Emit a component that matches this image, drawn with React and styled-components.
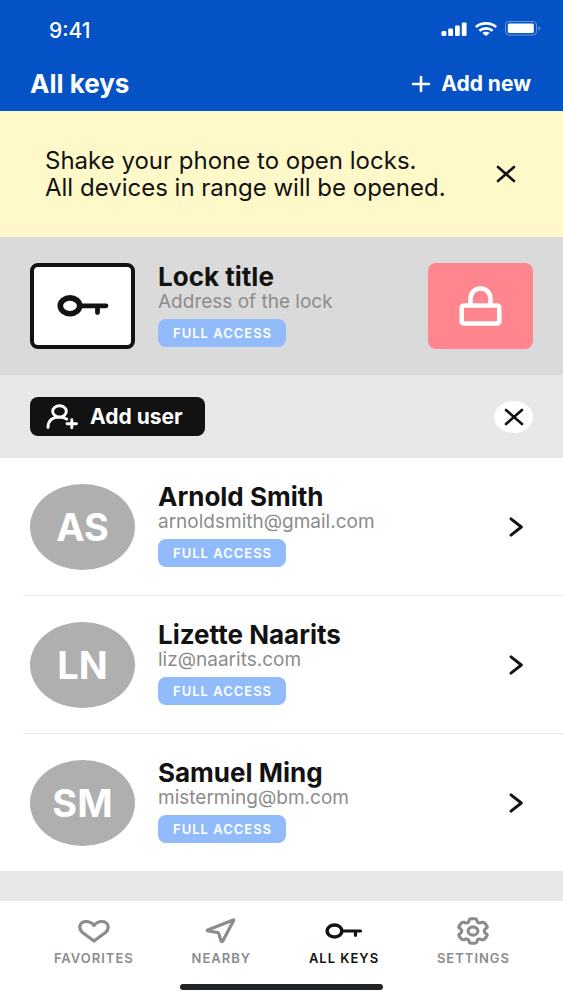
import React from "react";
import styled, { createGlobalStyle } from "styled-components";

const colors = {
  BLUE: "#0552c7",
  BLUE_LIGHT: "#91bbfb",
  YELLOW: "#fff9ca",
  RED: "#ff868f",
  BLACK: "#121212",
  GRAY_10: "#e8e8e8",
  GRAY_20: "#dadada",
  GRAY_40: "#afafaf",
  GRAY_60: "#8c8c8c",
};

const GlobalStyle = createGlobalStyle`
  * {
    box-sizing: border-box;
  }

  body {
    margin: 0;
    background-color: ${colors.GRAY_10};
    color: ${colors.BLACK};
    font-family: Inter, "Liberation Sans", sans-serif;
  }

  button {
    font-family: inherit;
    color: inherit;
    padding: 0;
    border: none;
    background: none;
    cursor: pointer;
  }

  h1, h2, p, ul {
    margin: 0;
    padding: 0;
  }

  svg {
    display: block;
    flex: none;
  }
`;

const Screen = styled.div`
  min-height: 100vh;
  display: flex;
  flex-direction: column;
`;

const Header = styled.header`
  background-color: ${colors.BLUE};
  color: #ffffff;
`;

const StatusBar = styled.div`
  height: 56px;
  padding: 4px 22px 0 49px;
  display: flex;
  justify-content: space-between;
  align-items: center;
  font-size: 21px;
  font-weight: 500;
`;

const StatusIcons = styled.div`
  padding-bottom: 3px;
  display: flex;
  align-items: center;
  gap: 8px;
`;

const TitleBar = styled.div`
  height: 55px;
  padding: 0 32px 0 30px;
  display: flex;
  justify-content: space-between;
  align-items: center;
`;

const Title = styled.h1`
  font-size: 26px;
  font-weight: 700;
`;

const AddNewButton = styled.button`
  display: flex;
  align-items: center;
  gap: 10px;
  font-size: 21px;
  font-weight: 700;
`;

const Banner = styled.section`
  height: 126px;
  padding: 0 47px 0 45px;
  display: flex;
  justify-content: space-between;
  align-items: center;
  background-color: ${colors.YELLOW};
  font-size: 24px;
  line-height: 27px;
`;

const LockRow = styled.section`
  height: 138px;
  padding: 0 30px;
  display: flex;
  align-items: center;
  gap: 23px;
  background-color: ${colors.GRAY_20};
`;

const Tile = styled.div`
  width: 105px;
  height: 86px;
  flex: none;
  display: flex;
  justify-content: center;
  align-items: center;
  background-color: #ffffff;
  border: 4px solid ${colors.BLACK};
  border-radius: 8px;
`;

const LockButton = styled.button`
  width: 105px;
  height: 86px;
  flex: none;
  display: flex;
  justify-content: center;
  align-items: center;
  background-color: ${colors.RED};
  color: #ffffff;
  border-radius: 8px;
`;

const Info = styled.div`
  flex: 1;
  min-width: 0;
  padding-bottom: 3px;
  display: flex;
  flex-direction: column;
  align-items: flex-start;
`;

const Name = styled.h2`
  font-size: 26px;
  line-height: 28px;
  font-weight: 700;
`;

const Detail = styled.p`
  font-size: 19px;
  line-height: 22px;
  color: ${colors.GRAY_60};
`;

const Badge = styled.span`
  margin-top: 6px;
  padding: 0 14px 0 15px;
  border-radius: 8px;
  background-color: ${colors.BLUE_LIGHT};
  color: #ffffff;
  font-size: 13px;
  line-height: 28px;
  font-weight: 600;
  letter-spacing: 1px;
`;

const ActionRow = styled.section`
  height: 83px;
  padding: 0 30px;
  display: flex;
  justify-content: space-between;
  align-items: center;
`;

const AddUserButton = styled.button`
  height: 39px;
  padding: 0 22px 0 16px;
  display: flex;
  align-items: center;
  gap: 12px;
  border-radius: 8px;
  background-color: ${colors.BLACK};
  color: #ffffff;
  font-size: 21px;
  font-weight: 700;
`;

const CloseButton = styled.button`
  width: 39px;
  height: 32px;
  display: flex;
  justify-content: center;
  align-items: center;
  border-radius: 50%;
  background-color: #ffffff;
`;

const UserList = styled.ul`
  list-style: none;
  background-color: #ffffff;
`;

const UserItem = styled.li`
  margin-left: 23px;

  & + & {
    border-top: 1px solid ${colors.GRAY_10};
  }
`;

const UserLink = styled.a`
  height: 137px;
  padding: 0 40px 0 7px;
  display: flex;
  align-items: center;
  gap: 23px;
  color: inherit;
  text-decoration: none;
`;

const Avatar = styled.div`
  width: 105px;
  height: 86px;
  flex: none;
  display: flex;
  justify-content: center;
  align-items: center;
  border-radius: 50%;
  background-color: ${colors.GRAY_40};
  color: #ffffff;
  font-size: 38px;
  font-weight: 700;
`;

const TabBar = styled.nav`
  margin-top: auto;
  padding: 16px 0 10px;
  background-color: #ffffff;
`;

const Tabs = styled.div`
  padding: 0 24px 0 25px;
  display: flex;
  justify-content: space-around;
`;

const Tab = styled.a`
  display: flex;
  flex-direction: column;
  align-items: center;
  gap: 4px;
  color: ${(props) => (props.$active ? colors.BLACK : colors.GRAY_60)};
  font-size: 13px;
  line-height: 18px;
  font-weight: 600;
  letter-spacing: 1px;
  text-decoration: none;
`;

const HomeIndicator = styled.div`
  width: 36%;
  height: 6px;
  margin: 17px auto 0;
  border-radius: 3px;
  background-color: #212427;
`;

const users = [
  { initials: "AS", name: "Arnold Smith", email: "arnoldsmith@gmail.com" },
  { initials: "LN", name: "Lizette Naarits", email: "liz@naarits.com" },
  { initials: "SM", name: "Samuel Ming", email: "misterming@bm.com" },
];

function Icon({ width, height, stroke = 2, children }) {
  return (
    <svg
      width={width}
      height={height}
      viewBox={`0 0 ${width} ${height}`}
      fill="none"
      stroke="currentColor"
      strokeWidth={stroke}
      strokeLinecap="round"
      strokeLinejoin="round"
      aria-hidden="true"
    >
      {children}
    </svg>
  );
}

function SignalIcon() {
  return (
    <svg width="26" height="14" fill="currentColor" aria-hidden="true">
      <rect x="0.5" y="9" width="4.8" height="5" rx="1.3" />
      <rect x="7.2" y="6.5" width="4.8" height="7.5" rx="1.3" />
      <rect x="14" y="3.5" width="4.8" height="10.5" rx="1.3" />
      <rect x="20.8" y="0.5" width="4.8" height="13.5" rx="1.3" />
    </svg>
  );
}

function WifiIcon() {
  return (
    <svg width="22" height="14" viewBox="0 0 22 14" aria-hidden="true">
      <g fill="none" stroke="currentColor" strokeWidth="2.6">
        <path d="M0.8 5C6.5 0.2 15.5 0.2 21.2 5" />
        <path d="M4.4 8.8C8.2 5.5 13.8 5.5 17.6 8.8" />
      </g>
      <path d="M7.3 11C9.3 9.2 12.7 9.2 14.7 11L11 14Z" fill="currentColor" />
    </svg>
  );
}

function BatteryIcon() {
  return (
    <svg width="36" height="15" viewBox="0 0 36 15" aria-hidden="true">
      <rect x="0.5" y="0.5" width="31" height="13.5" rx="3.5" fill="none" stroke="#ffffff" strokeOpacity="0.4" />
      <rect x="2.8" y="2.5" width="26" height="9.5" rx="1.5" fill="#ffffff" />
      <path d="M33.5 5V9.6C35.8 8.8 35.8 5.8 33.5 5Z" fill="#ffffff" fillOpacity="0.4" />
    </svg>
  );
}

function CloseIcon() {
  return (
    <Icon width={20} height={18} stroke={2.6}>
      <path d="M2 2L18 16M18 2L2 16" />
    </Icon>
  );
}

function KeyIcon() {
  return (
    <Icon width={52} height={22} stroke={4.8}>
      <ellipse cx="13" cy="10.8" rx="9.7" ry="7.9" strokeWidth="5.6" />
      <path d="M24 10.8H49M40.5 12V17.5" />
    </Icon>
  );
}

function SmallKeyIcon() {
  return (
    <Icon width={38} height={28} stroke={3.2}>
      <ellipse cx="9.5" cy="14" rx="7.4" ry="6" strokeWidth="3.5" />
      <path d="M18 14H35.5M30.5 15V18.3" />
    </Icon>
  );
}

function LockIcon() {
  return (
    <Icon width={43} height={41} stroke={4.5}>
      <rect x="2.7" y="19.5" width="37.6" height="18" rx="2" />
      <path d="M11.5 19V13C11.5 -1 31.5 -1 31.5 13V19" />
    </Icon>
  );
}

function AddUserIcon() {
  return (
    <Icon width={32} height={26} stroke={2.9}>
      <ellipse cx="13.5" cy="7.4" rx="6.8" ry="5.7" />
      <path d="M2 23.5C2 16.5 6.5 13.1 13.5 13.1C16.7 13.1 19 13.8 20.8 15.2" />
      <path d="M21 19.8H30.5M25.8 15.8V23.8" />
    </Icon>
  );
}

function ChevronIcon() {
  return (
    <Icon width={14} height={20} stroke={2.9}>
      <path d="M2 1.8L12.3 10L2 18.2" />
    </Icon>
  );
}

function HeartIcon() {
  return (
    <Icon width={34} height={28} stroke={3.2}>
      <path d="M17 24L5.5 15.5C0.5 11 3 4.5 9.2 4.5C13 4.5 15.5 6.5 17 8.5C18.5 6.5 21 4.5 24.8 4.5C31 4.5 33.5 11 28.5 15.5Z" />
    </Icon>
  );
}

function NearbyIcon() {
  return (
    <Icon width={34} height={28} stroke={3.2}>
      <path d="M29.6 3.4C30 3 29.7 2.8 29.2 3L3.7 12.9C3.1 13.2 3.1 13.9 3.9 14L13 15.3C14 15.5 14.6 16 14.9 16.8L17 24C17.3 24.8 18.4 24.8 18.8 24Z" />
    </Icon>
  );
}

function SettingsIcon() {
  return (
    <Icon width={34} height={28} stroke={3.1}>
      <ellipse cx="17" cy="14" rx="4.9" ry="4.1" />
      <path d="M14.8 1.8H19.2Q20.6 1.8 20.8 3L21.1 4.3Q21.7 6.3 24 5.9L26 5.3Q27.7 4.9 28.6 6L30.9 9Q31.7 10.2 30.5 11.1L29.2 12Q27.3 14 29.2 16L30.5 16.9Q31.7 17.8 30.9 19L28.6 22Q27.7 23.1 26 22.7L24 22.1Q21.7 21.7 21.1 23.7L20.8 25Q20.6 26.2 19.2 26.2H14.8Q13.4 26.2 13.2 25L12.9 23.7Q12.3 21.7 10 22.1L8 22.7Q6.3 23.1 5.4 22L3.1 19Q2.3 17.8 3.5 16.9L4.8 16Q6.7 14 4.8 12L3.5 11.1Q2.3 10.2 3.1 9L5.4 6Q6.3 4.9 8 5.3L10 5.9Q12.3 6.3 12.9 4.3L13.2 3Q13.4 1.8 14.8 1.8Z" />
    </Icon>
  );
}

function App() {
  return (
    <Screen>
      <GlobalStyle />
      <Header>
        <StatusBar>
          <span>9:41</span>
          <StatusIcons>
            <SignalIcon />
            <WifiIcon />
            <BatteryIcon />
          </StatusIcons>
        </StatusBar>
        <TitleBar>
          <Title>All keys</Title>
          <AddNewButton type="button">
            <Icon width={20} height={18} stroke={2.6}>
              <path d="M2 9H18M10 2V16" />
            </Icon>
            Add new
          </AddNewButton>
        </TitleBar>
      </Header>

      <main>
        <Banner>
          <p>
            Shake your phone to open locks.
            <br />
            All devices in range will be opened.
          </p>
          <button type="button" aria-label="Dismiss">
            <CloseIcon />
          </button>
        </Banner>

        <LockRow>
          <Tile>
            <KeyIcon />
          </Tile>
          <Info>
            <Name>Lock title</Name>
            <Detail>Address of the lock</Detail>
            <Badge>FULL ACCESS</Badge>
          </Info>
          <LockButton type="button" aria-label="Lock">
            <LockIcon />
          </LockButton>
        </LockRow>

        <ActionRow>
          <AddUserButton type="button">
            <AddUserIcon />
            Add user
          </AddUserButton>
          <CloseButton type="button" aria-label="Close">
            <CloseIcon />
          </CloseButton>
        </ActionRow>

        <UserList>
          {users.map((user) => (
            <UserItem key={user.email}>
              <UserLink href="#user">
                <Avatar>{user.initials}</Avatar>
                <Info>
                  <Name>{user.name}</Name>
                  <Detail>{user.email}</Detail>
                  <Badge>FULL ACCESS</Badge>
                </Info>
                <ChevronIcon />
              </UserLink>
            </UserItem>
          ))}
        </UserList>
      </main>

      <TabBar>
        <Tabs>
          <Tab href="#favorites">
            <HeartIcon />
            FAVORITES
          </Tab>
          <Tab href="#nearby">
            <NearbyIcon />
            NEARBY
          </Tab>
          <Tab href="#keys" $active>
            <SmallKeyIcon />
            ALL KEYS
          </Tab>
          <Tab href="#settings">
            <SettingsIcon />
            SETTINGS
          </Tab>
        </Tabs>
        <HomeIndicator />
      </TabBar>
    </Screen>
  );
}

export default App;
